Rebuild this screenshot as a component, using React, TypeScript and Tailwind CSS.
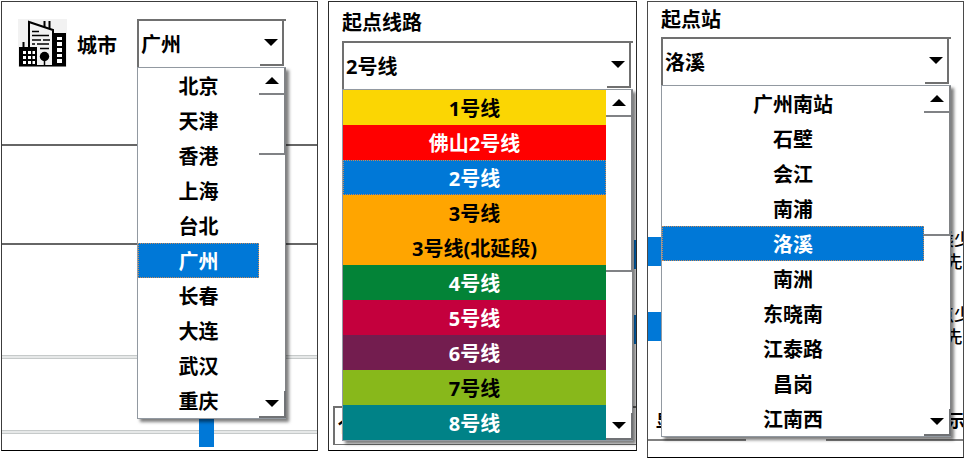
import { useState } from "react";

type Item = { name: string; tone?: string };

const cities: Item[] = ["北京", "天津", "香港", "上海", "台北", "广州", "长春", "大连", "武汉", "重庆"].map((name) => ({ name }));

const lines: Item[] = [
  { name: "1号线", tone: "bg-[#fbd603] text-black" },
  { name: "佛山2号线", tone: "bg-[#ff0000] text-white" },
  { name: "2号线", tone: "bg-[#0078d7] text-white" },
  { name: "3号线", tone: "bg-[#ffa500] text-black" },
  { name: "3号线(北延段)", tone: "bg-[#ffa500] text-black" },
  { name: "4号线", tone: "bg-[#038337] text-white" },
  { name: "5号线", tone: "bg-[#c4003d] text-white" },
  { name: "6号线", tone: "bg-[#731d4f] text-white" },
  { name: "7号线", tone: "bg-[#88b81b] text-black" },
  { name: "8号线", tone: "bg-[#008287] text-white" },
];

const stations: Item[] = ["广州南站", "石壁", "会江", "南浦", "洛溪", "南洲", "东晓南", "江泰路", "昌岗", "江南西"].map((name) => ({ name }));

function Triangle({ up = false }: { up?: boolean }) {
  return (
    <svg width="14" height="7" viewBox="0 0 14 7" aria-hidden="true">
      <path d={up ? "M0 7 7 0l7 7z" : "M0 0h14L7 7z"} fill="#000" />
    </svg>
  );
}

type ComboProps = { id: string; items: Item[]; initial: string; thumb: string };

function Combo({ id, items, initial, thumb }: ComboProps) {
  const [value, setValue] = useState(initial);
  return (
    <div className="relative z-10">
      <div className="flex h-12 border-t-2 border-l-2 border-[#707070] bg-white pr-0.5">
        <select
          id={id}
          value={value}
          onChange={(e) => setValue(e.target.value)}
          className="min-w-0 flex-1 appearance-none bg-white pt-0.5 pl-0.5 text-xl font-bold outline-none"
        >
          {items.map((item) => (
            <option key={item.name}>{item.name}</option>
          ))}
        </select>
        <button
          type="button"
          aria-label="展开"
          className="flex h-[45px] w-6 items-center justify-center border-r-2 border-b-2 border-[#707070]"
        >
          <Triangle />
        </button>
      </div>
      <div className="absolute top-full left-0 flex w-full border-t border-b border-l border-[#9299a1] bg-white shadow-[3px_3px_3px_rgba(0,0,0,0.5)]">
        <div role="listbox" className="min-w-0 flex-1">
          {items.map((item) => {
            const selected = item.name === value;
            const plain = selected ? "bg-[#0078d7] text-white" : "bg-white text-black";
            return (
              <button
                key={item.name}
                type="button"
                role="option"
                aria-selected={selected}
                onClick={() => setValue(item.name)}
                className={`flex h-[35px] w-full items-center justify-center border border-dotted pt-0.5 text-xl font-bold whitespace-nowrap ${
                  selected ? "border-[#c98a58]" : "border-transparent"
                } ${item.tone ?? plain}`}
              >
                {item.name}
              </button>
            );
          })}
        </div>
        <div className="flex w-[27px] flex-col">
          <button
            type="button"
            aria-label="向上滚动"
            className="flex h-[27px] shrink-0 items-center justify-center border-r-2 border-b-2 border-[#808285]"
          >
            <Triangle up />
          </button>
          <div className={`${thumb} border-r-2 border-b-2 border-[#808285]`} />
          <div className="flex-1 border-r border-[#808285]" />
          <button
            type="button"
            aria-label="向下滚动"
            className="flex h-[27px] shrink-0 items-center justify-center border-r-2 border-b-2 border-[#707275]"
          >
            <Triangle />
          </button>
        </div>
      </div>
    </div>
  );
}

function CityIcon() {
  return (
    <svg width="49" height="48" viewBox="0 0 49 48" aria-hidden="true">
      <path d="M0 0h49v48H0z" fill="#f2f2f2" />
      <path d="M11 28V3l24 8v4" fill="none" stroke="#000" strokeWidth="2" />
      <path d="M26.5 2v6M31.5 2v8M5.5 23v6" stroke="#000" strokeWidth="2" />
      <path
        d="M14 12.500h7M14 16.500h17M14 21h9M25 21h7M14 25h3M19 25h12M22 29.500h9"
        stroke="#000"
        strokeWidth="1.700"
      />
      <path d="M34 14h14v33H34zM1 28h18v19H1z" />
      <path d="M1 46h47v1.500H1z" />
      <path
        d="M39 18h5v3h-5zM39 23h5v4h-5zM39 29h5v4h-5zM39 35h5v3h-5zM39 40h5v4h-5zM5 32h3v3H5zM10 32h3v3h-3zM14.500 32h2.500v3h-2.500zM5 37h3v3H5zM10 37h3v3h-3zM14.500 37h2.500v3h-2.500zM5 42h3v3H5zM10 42h3v3h-3zM14.500 42h2.500v3h-2.500z"
        fill="#fff"
      />
      <circle cx="26.500" cy="37.500" r="4.700" />
      <path d="M26.500 41v6" stroke="#000" strokeWidth="1.500" />
    </svg>
  );
}

function Rule() {
  return <div className="h-1 border-y border-[#c6caca] bg-[#e6e8e8]" />;
}

function CityPanel() {
  return (
    <section className="overflow-hidden border border-[#3c3c3c] border-b-black">
      <div className="flex h-36 items-start border-b-2 border-[#666] pt-[17px] pl-4">
        <CityIcon />
        <label htmlFor="city" className="ml-2.5 w-[60px] pt-0.5 text-xl leading-[50px] font-bold">
          城市
        </label>
        <div className="w-[149px]">
          <Combo id="city" items={cities} initial="广州" thumb="h-[60px]" />
        </div>
      </div>
      <div className="h-[99px] border-b-2 border-[#666]" />
      <div className="h-[110px]" />
      <Rule />
      <div className="relative h-[71px]">
        <div className="absolute top-14 left-[197px] h-8 w-[15px] bg-[#0078d7]" />
      </div>
      <Rule />
      <div className="h-4" />
    </section>
  );
}

function LinePanel() {
  return (
    <section className="overflow-hidden border border-[#2c2c2c] border-b-black pb-[5px]">
      <div className="flex flex-col gap-[3px] pt-1.5 pr-[3px] pl-[13px]">
        <label htmlFor="line" className="text-xl leading-[30px] font-bold">
          起点线路
        </label>
        <Combo id="line" items={lines} initial="2号线" thumb="h-[155px]" />
      </div>
      <div className="mt-[151px] ml-auto h-[29px] w-0.5 bg-[#0078d7]" />
      <div className="mt-[46px] ml-auto h-[29px] w-0.5 bg-[#0078d7]" />
      <input
        aria-label="数量"
        defaultValue="1"
        className="mt-[62px] ml-1 block h-[39px] w-full border-t-2 border-b border-l-2 border-[#707070] pl-0.5 text-xl font-bold outline-none"
      />
    </section>
  );
}

function Preference({ top, bottom }: { top: string; bottom: string }) {
  return (
    <div className="flex items-center justify-between">
      <div className="h-[29px] w-3.5 bg-[#0078d7]" />
      <div className="-mr-2 text-center text-[17px] leading-[22px] font-medium">
        <div>{top}</div>
        <div>{bottom}</div>
      </div>
    </div>
  );
}

function StationPanel() {
  return (
    <section className="overflow-hidden border border-[#4a4a4a] border-b-black pb-4">
      <div className="flex flex-col gap-0.5 pt-[3px] pr-3 pl-[13px]">
        <label htmlFor="station" className="text-xl leading-[30px] font-bold">
          起点站
        </label>
        <Combo id="station" items={stations} initial="洛溪" thumb="h-[123px]" />
      </div>
      <div className="mt-36 flex flex-col gap-[31px]">
        <Preference top="换乘少" bottom="优先" />
        <Preference top="站点少" bottom="优先" />
      </div>
      <div className="mt-[61px] -mr-0.5 flex justify-between pl-2 text-[17px] leading-6 font-bold">
        <span>显示</span>
        <span>显示</span>
      </div>
      <div className="mt-1.5 flex h-0.5 justify-between">
        <div className="w-[98px] bg-[#808080]" />
        <div className="w-[137px] bg-[#808080]" />
      </div>
    </section>
  );
}

export default function App() {
  return (
    <main
      lang="zh-CN"
      className="grid grid-cols-[317fr_309fr_317fr] items-start gap-2.5 bg-white p-px font-['Noto_Sans','Noto_Sans_CJK_SC',sans-serif] text-black"
    >
      <CityPanel />
      <LinePanel />
      <StationPanel />
    </main>
  );
}
